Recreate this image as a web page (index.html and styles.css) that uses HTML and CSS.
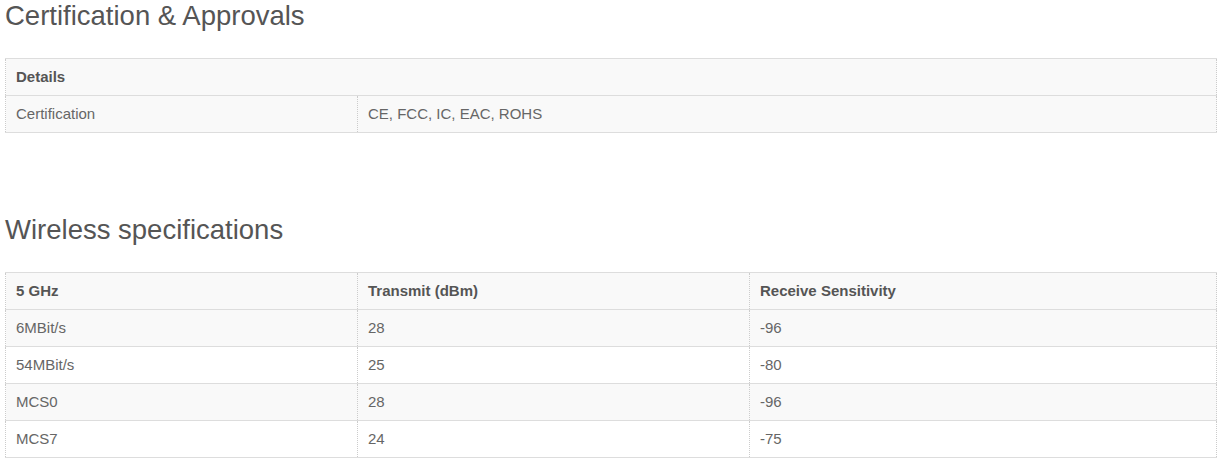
FILE: index.html
```html
<!DOCTYPE html>
<html lang="en">
<head>
<meta charset="utf-8">
<title>Specifications</title>
<link rel="stylesheet" href="styles.css">
</head>
<body>
<main class="page">
  <section class="spec-section">
    <h2 class="spec-title">Certification &amp; Approvals</h2>
    <table class="spec-table">
      <colgroup><col class="col-a"><col></colgroup>
      <thead>
        <tr><th colspan="2">Details</th></tr>
      </thead>
      <tbody>
        <tr><td>Certification</td><td>CE, FCC, IC, EAC, ROHS</td></tr>
      </tbody>
    </table>
  </section>

  <section class="spec-section spec-section--next">
    <h2 class="spec-title">Wireless specifications</h2>
    <table class="spec-table">
      <colgroup><col class="col-a"><col class="col-b"><col></colgroup>
      <thead>
        <tr><th>5 GHz</th><th>Transmit (dBm)</th><th>Receive Sensitivity</th></tr>
      </thead>
      <tbody>
        <tr><td>6MBit/s</td><td>28</td><td>-96</td></tr>
        <tr><td>54MBit/s</td><td>25</td><td>-80</td></tr>
        <tr><td>MCS0</td><td>28</td><td>-96</td></tr>
        <tr><td>MCS7</td><td>24</td><td>-75</td></tr>
      </tbody>
    </table>
  </section>
</main>
</body>
</html>
```

FILE: styles.css
```css
html, body {
  margin: 0;
  padding: 0;
  background: #fff;
}

body {
  font-family: "Liberation Sans", Arial, sans-serif;
  color: #666;
}

.page {
  width: 1212px;
  padding-left: 5px;
}

.spec-title {
  margin: 0 0 27px;
  padding-top: 1px;
  font-size: 27.5px;
  line-height: 30px;
  font-weight: normal;
  color: #555;
}

.spec-section--next {
  margin-top: 81px;
}

.spec-table {
  width: 1212px;
  border-collapse: collapse;
  table-layout: fixed;
  font-size: 15px;
  line-height: 20px;
}

.col-a { width: 352px; }
.col-b { width: 392px; }

.spec-table th,
.spec-table td {
  padding: 8px 10px;
  text-align: left;
  vertical-align: top;
  border-top: 1px solid #ddd;
  border-bottom: 1px solid #ddd;
  border-left: 1px dotted #ccc;
  border-right: 1px dotted #ccc;
}

.spec-table th {
  font-weight: bold;
  color: #555;
  background: #f9f9f9;
}

.spec-table td {
  color: #666;
}

.spec-table tbody tr:nth-child(odd) td {
  background: #f9f9f9;
}
```
